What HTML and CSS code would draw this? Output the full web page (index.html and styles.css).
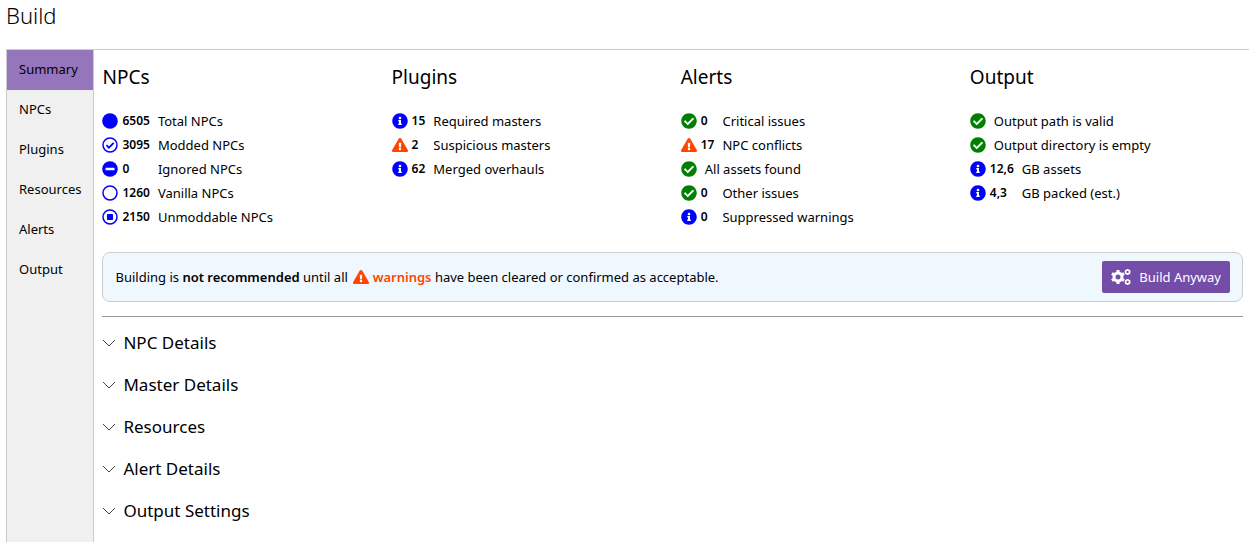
FILE: index.html
```html
<!DOCTYPE html>
<html lang="en">
<head>
  <meta charset="UTF-8">
  <title>Build</title>
  <link rel="stylesheet" href="styles.css">
</head>
<body>

  <!-- Shared icons -->
  <svg class="icon-defs" aria-hidden="true">
    <symbol id="icon-ok" viewBox="0 0 512 512">
      <path d="M504 256c0 136.967-111.033 248-248 248S8 392.967 8 256 119.033 8 256 8s248 111.033 248 248zM227.314 387.314l184-184c6.248-6.248 6.248-16.379 0-22.627l-22.627-22.627c-6.248-6.249-16.379-6.249-22.628 0L216 308.118l-70.059-70.059c-6.248-6.248-16.379-6.248-22.628 0l-22.627 22.627c-6.248 6.248-6.248 16.379 0 22.627l104 104c6.249 6.249 16.379 6.249 22.628.001z"/>
    </symbol>
    <symbol id="icon-info" viewBox="0 0 512 512">
      <path d="M256 8C119.043 8 8 119.083 8 256c0 136.997 111.043 248 248 248s248-111.003 248-248C504 119.083 392.957 8 256 8zm0 110c23.196 0 42 18.804 42 42s-18.804 42-42 42-42-18.804-42-42 18.804-42 42-42zm56 254c0 6.627-5.373 12-12 12h-88c-6.627 0-12-5.373-12-12v-24c0-6.627 5.373-12 12-12h12v-64h-12c-6.627 0-12-5.373-12-12v-24c0-6.627 5.373-12 12-12h64c6.627 0 12 5.373 12 12v100h12c6.627 0 12 5.373 12 12v24z"/>
    </symbol>
    <symbol id="icon-warning" viewBox="0 0 576 512">
      <path d="M569.517 440.013C587.975 472.007 564.806 512 527.94 512H48.054c-36.937 0-59.999-40.055-41.577-71.987L246.423 23.985c18.467-32.009 64.72-31.951 83.154 0l239.94 416.028zM288 354c-25.405 0-46 20.595-46 46s20.595 46 46 46 46-20.595 46-46-20.595-46-46-46zm-43.673-165.346l7.418 136c.347 6.364 5.609 11.346 11.982 11.346h48.546c6.373 0 11.635-4.982 11.982-11.346l7.418-136c.375-6.874-5.098-12.654-11.982-12.654h-63.383c-6.884 0-12.356 5.78-11.981 12.654z"/>
    </symbol>
    <symbol id="icon-chevron" viewBox="0 0 14 14">
      <path d="M1 4l6 6 6-6" fill="none" stroke="currentColor"/>
    </symbol>
  </svg>

  <h1>Build</h1>

  <div class="tabs">
    <div class="tab-list" role="tablist" aria-orientation="vertical">
      <button class="tab active" role="tab" aria-selected="true">Summary</button>
      <button class="tab" role="tab">NPCs</button>
      <button class="tab" role="tab">Plugins</button>
      <button class="tab" role="tab">Resources</button>
      <button class="tab" role="tab">Alerts</button>
      <button class="tab" role="tab">Output</button>
    </div>

    <main class="tab-content">
      <div class="summary-grid">
        <section>
          <h2>NPCs</h2>
          <ul class="status-list">
            <li>
              <svg class="icon info" viewBox="0 0 16 16"><circle cx="8" cy="8" r="7.8"/></svg>
              <span class="count">6505</span>
              <span class="label">Total NPCs</span>
            </li>
            <li>
              <svg class="icon info" viewBox="0 0 16 16"><g fill="none" stroke="currentColor"><circle cx="8" cy="8" r="7" stroke-width="1.5"/><path d="M4.4 8.2l2.5 2.5 4.8-4.9" stroke-width="1.7"/></g></svg>
              <span class="count">3095</span>
              <span class="label">Modded NPCs</span>
            </li>
            <li>
              <svg class="icon info" viewBox="0 0 16 16"><circle cx="8" cy="8" r="7.8"/><rect x="3.5" y="6.7" width="9" height="2.6" rx="0.4" fill="white"/></svg>
              <span class="count">0</span>
              <span class="label">Ignored NPCs</span>
            </li>
            <li>
              <svg class="icon info" viewBox="0 0 16 16"><circle cx="8" cy="8" r="7" fill="none" stroke="currentColor" stroke-width="1.5"/></svg>
              <span class="count">1260</span>
              <span class="label">Vanilla NPCs</span>
            </li>
            <li>
              <svg class="icon info" viewBox="0 0 16 16"><circle cx="8" cy="8" r="7" fill="none" stroke="currentColor" stroke-width="1.5"/><rect x="5" y="5" width="6" height="6" rx="0.4"/></svg>
              <span class="count">2150</span>
              <span class="label">Unmoddable NPCs</span>
            </li>
          </ul>
        </section>

        <section>
          <h2>Plugins</h2>
          <ul class="status-list">
            <li>
              <svg class="icon info"><use href="#icon-info"/></svg>
              <span class="count">15</span>
              <span class="label">Required masters</span>
            </li>
            <li>
              <svg class="icon warning"><use href="#icon-warning"/></svg>
              <span class="count">2</span>
              <span class="label">Suspicious masters</span>
            </li>
            <li>
              <svg class="icon info"><use href="#icon-info"/></svg>
              <span class="count">62</span>
              <span class="label">Merged overhauls</span>
            </li>
          </ul>
        </section>

        <section>
          <h2>Alerts</h2>
          <ul class="status-list">
            <li>
              <svg class="icon ok"><use href="#icon-ok"/></svg>
              <span class="count">0</span>
              <span class="label">Critical issues</span>
            </li>
            <li>
              <svg class="icon warning"><use href="#icon-warning"/></svg>
              <span class="count">17</span>
              <span class="label">NPC conflicts</span>
            </li>
            <li>
              <svg class="icon ok"><use href="#icon-ok"/></svg>
              <span class="label wide">All assets found</span>
            </li>
            <li>
              <svg class="icon ok"><use href="#icon-ok"/></svg>
              <span class="count">0</span>
              <span class="label">Other issues</span>
            </li>
            <li>
              <svg class="icon info"><use href="#icon-info"/></svg>
              <span class="count">0</span>
              <span class="label">Suppressed warnings</span>
            </li>
          </ul>
        </section>

        <section>
          <h2>Output</h2>
          <ul class="status-list">
            <li>
              <svg class="icon ok"><use href="#icon-ok"/></svg>
              <span class="label wide">Output path is valid</span>
            </li>
            <li>
              <svg class="icon ok"><use href="#icon-ok"/></svg>
              <span class="label wide">Output directory is empty</span>
            </li>
            <li>
              <svg class="icon info"><use href="#icon-info"/></svg>
              <span class="count">12,6</span>
              <span class="label">GB assets</span>
            </li>
            <li>
              <svg class="icon info"><use href="#icon-info"/></svg>
              <span class="count">4,3</span>
              <span class="label">GB packed (est.)</span>
            </li>
          </ul>
        </section>
      </div>

      <div class="notice">
        <p>Building is <strong>not recommended</strong> until all <svg class="icon warning"><use href="#icon-warning"/></svg> <strong class="warning">warnings</strong> have been cleared or confirmed as acceptable.</p>
        <button class="build-btn">
          <svg class="cogs" viewBox="0 0 20 16" aria-hidden="true">
            <g fill="none" stroke="currentColor">
              <circle cx="7" cy="8" r="4" stroke-width="3"/>
              <path d="M7 3V1M7 13v2M11.3 5.5l1.8-1M2.7 10.5l-1.8 1M11.3 10.5l1.8 1M2.7 5.5l-1.8-1" stroke-width="3"/>
              <circle cx="16.6" cy="3" r="1.9" stroke-width="1.5"/>
              <path d="M16.6 .9V0M16.6 5.1V6M18.4 2l.9-.5M14.8 4l-.9.5M18.4 4l.9.5M14.8 2l-.9-.5" stroke-width="1.5"/>
              <circle cx="16.6" cy="13" r="1.9" stroke-width="1.5"/>
              <path d="M16.6 10.9V10M16.6 15.1v.9M18.4 12l.9-.5M14.8 14l-.9.5M18.4 14l.9.5M14.8 12l-.9-.5" stroke-width="1.5"/>
            </g>
          </svg>
          Build Anyway
        </button>
      </div>

      <div class="details-list">
        <details>
          <summary><svg class="chevron"><use href="#icon-chevron"/></svg>NPC Details</summary>
        </details>
        <details>
          <summary><svg class="chevron"><use href="#icon-chevron"/></svg>Master Details</summary>
        </details>
        <details>
          <summary><svg class="chevron"><use href="#icon-chevron"/></svg>Resources</summary>
        </details>
        <details>
          <summary><svg class="chevron"><use href="#icon-chevron"/></svg>Alert Details</summary>
        </details>
        <details>
          <summary><svg class="chevron"><use href="#icon-chevron"/></svg>Output Settings</summary>
        </details>
      </div>
    </main>
  </div>

</body>
</html>
```
FILE: styles.css
```css
* {
  box-sizing: border-box;
}
body {
  display: flex;
  flex-direction: column;
  min-height: 100vh;
  margin: 0;
  padding-left: 6px;
  font-family: "Noto Sans", sans-serif;
  font-size: 13px;
  line-height: 24px;
  color: black;
  background: white;
}
h1 {
  margin: 0 0 19px;
  font-size: 22px;
  font-weight: 300;
  line-height: 30px;
}
h2 {
  margin: 0 0 16px;
  font-size: 19px;
  font-weight: 400;
  line-height: 32px;
}
button {
  font-family: inherit;
  font-size: inherit;
  cursor: pointer;
}
.icon-defs {
  position: absolute;
  width: 0;
  height: 0;
}
.tabs {
  display: flex;
  flex: 1;
  border-top: 1px solid #ccc;
  border-left: 1px solid #ccc;
}
.tab-list {
  display: flex;
  flex-direction: column;
  background: #f0f0f0;
  border-right: 1px solid #ccc;
}
.tab {
  height: 40px;
  padding: 0 12px 2px;
  border: none;
  background: none;
  color: black;
  text-align: left;
}
.tab.active {
  background: #9575bb;
}
.tab-content {
  flex: 1;
  padding: 11px 6px 0 8px;
}
.summary-grid {
  display: grid;
  grid-template-columns: repeat(4, 1fr);
  gap: 16px;
}
.status-list {
  display: grid;
  grid-template-columns: 16px auto 1fr;
  align-items: center;
  margin: 0;
  padding: 0;
  list-style: none;
}
.status-list li {
  display: contents;
}
.icon {
  width: 16px;
  height: 16px;
  fill: currentColor;
}
.info {
  color: blue;
}
.ok {
  color: green;
}
.warning {
  color: orangered;
}
.count {
  margin-left: 4px;
  font-size: 12px;
  font-weight: 600;
}
.label {
  margin-left: 8px;
}
.label.wide {
  grid-column: 2 / -1;
}
.notice {
  display: flex;
  align-items: center;
  justify-content: space-between;
  margin-top: 23px;
  padding: 8px 12px;
  border: 1px solid #ccc;
  border-radius: 8px;
  background: aliceblue;
}
.notice p {
  margin: 0;
}
.notice strong {
  font-weight: 600;
}
.notice .icon {
  margin: 0 0 0 2px;
  vertical-align: -3px;
}
.build-btn {
  display: flex;
  align-items: center;
  gap: 8px;
  height: 32px;
  padding: 0 9px;
  border: none;
  border-radius: 2px;
  background: #744da9;
  color: white;
}
.cogs {
  width: 20px;
  height: 16px;
}
.details-list {
  margin-top: 14px;
  padding-top: 5px;
  border-top: 1px solid #999;
}
summary {
  display: flex;
  align-items: center;
  gap: 7px;
  height: 42px;
  font-size: 17px;
  list-style: none;
  cursor: pointer;
}
.chevron {
  width: 14px;
  height: 14px;
  color: #444;
}
```
